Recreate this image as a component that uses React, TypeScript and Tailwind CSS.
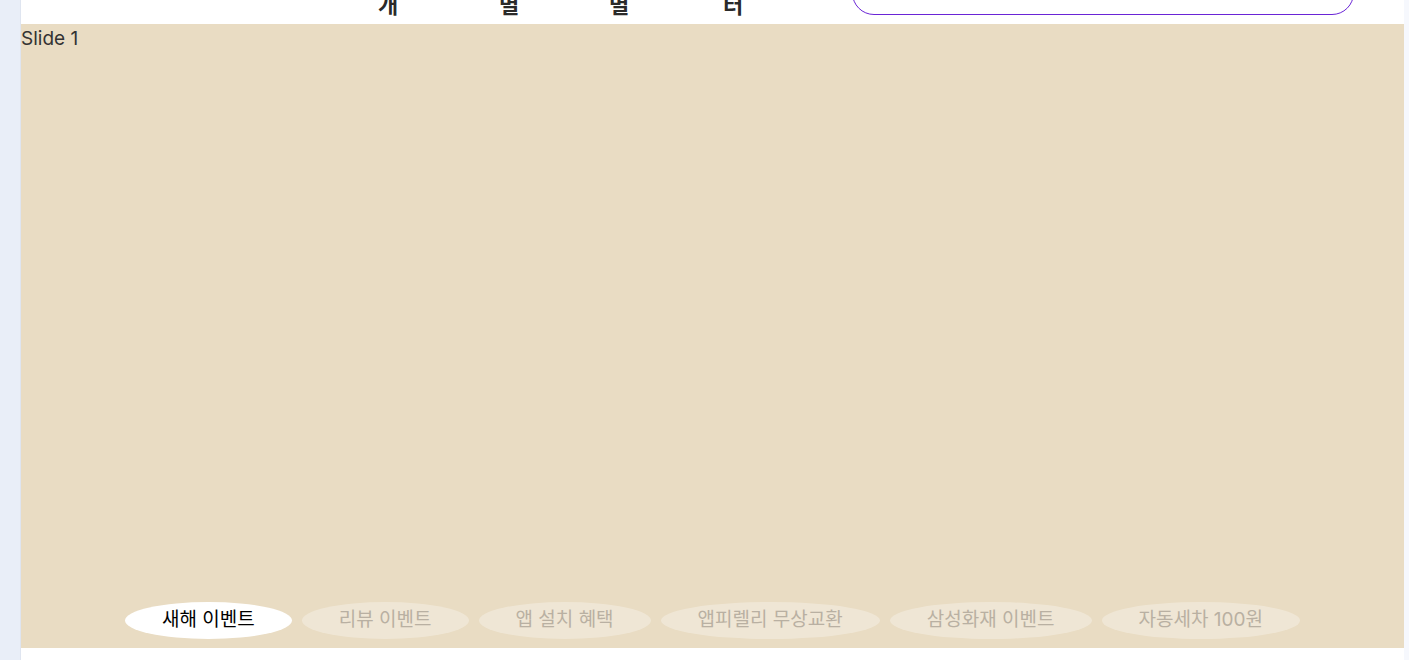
import { FC } from "react";

const navItems = [
  { label: "회사소개", cls: "ml-[357px]" },
  { label: "지역별", cls: "ml-[99px]" },
  { label: "유형별", cls: "ml-[88px]" },
  { label: "고객센터", cls: "ml-[92px]" },
];

const tabs = ["리뷰 이벤트", "앱 설치 혜택", "앱피렐리 무상교환", "삼성화재 이벤트", "자동세차 100원"];

const Header: FC = () => (
  <header className="h-[24px] overflow-hidden bg-white flex items-end">
    <ul className="flex items-end pb-[6px]">
      {navItems.map((item) => (
        <li
          key={item.label}
          className={`${item.cls} w-[22px] text-[22px] leading-[26px] font-semibold text-[#2a2a2a]`}
        >
          {item.label}
        </li>
      ))}
    </ul>
    <div className="ml-auto mr-[50px] mb-[9px] w-[502px] h-[44px] shrink-0 rounded-full border border-[#6a24d6] bg-white" />
  </header>
);

const Slider: FC = () => (
  <section className="h-[624px] bg-[#e9dcc3] flex flex-col">
    <div className="flex-1 text-[19px] leading-[1.55] text-[#333]">Slide 1</div>
    <div className="flex justify-center gap-[10px] pb-[9px]">
      <button className="h-[37px] px-[37px] flex items-center rounded-[50%] bg-white text-[19px] text-black">
        <span>새해 이벤트</span>
      </button>
      {tabs.map((t) => (
        <button
          key={t}
          className="h-[37px] px-[37px] flex items-center rounded-[50%] bg-white/30 text-[19px] text-[#b9b0a2]"
        >
          {t}
        </button>
      ))}
    </div>
  </section>
);

export default function App() {
  return (
    <div
      className="flex h-[660px] w-full overflow-hidden bg-white"
      style={{ fontFamily: 'Inter, "Noto Sans CJK KR", sans-serif' }}
    >
      <div className="w-[21px] shrink-0 bg-[#e9eef8] border-r border-[#dfe5f0]" />
      <main className="flex-1 flex flex-col bg-white">
        <Header />
        <Slider />
      </main>
      <div className="w-[5px] shrink-0 bg-[#f6f8fd]" />
    </div>
  );
}
